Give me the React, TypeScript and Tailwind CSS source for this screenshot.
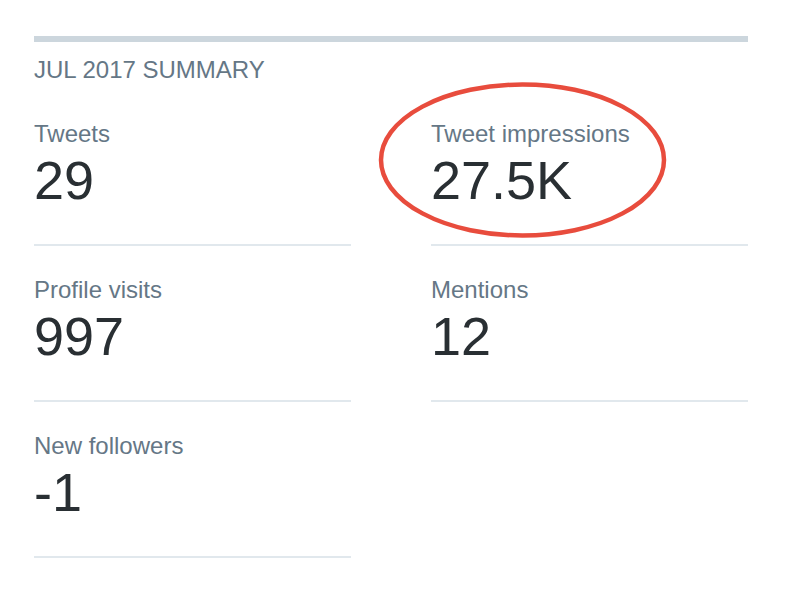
import React from "react";

type Stat = { label: string; value: string; circled?: boolean };

const stats: Stat[] = [
  { label: "Tweets", value: "29" },
  { label: "Tweet impressions", value: "27.5K", circled: true },
  { label: "Profile visits", value: "997" },
  { label: "Mentions", value: "12" },
  { label: "New followers", value: "-1" },
];

function Cell({ stat }: { stat: Stat }) {
  return (
    <div className="relative pt-[30px] pb-[34px] border-b-2 border-[#e1e8ed]">
      {stat.circled && (
        <svg
          className="absolute left-[-54px] top-[-10px] pointer-events-none"
          width="292"
          height="160"
          viewBox="0 0 292 160"
        >
          <ellipse
            cx="145.5"
            cy="80"
            rx="141.5"
            ry="75.5"
            fill="none"
            stroke="#e84c3d"
            strokeWidth="4.5"
          />
        </svg>
      )}
      <div className="relative text-[24px] leading-[28px] text-[#657786]">{stat.label}</div>
      <div className="relative mt-[2px] text-[54px] leading-[60px] text-[#292f33]">{stat.value}</div>
    </div>
  );
}

export default function App() {
  return (
    <div
      className="w-[798px] h-[608px] bg-white overflow-hidden"
      style={{ fontFamily: '"Liberation Sans", Arial, sans-serif' }}
    >
      <div className="ml-[34px] mt-[36px] w-[714px]">
        <div className="h-[6px] bg-[#ccd6dd]" />
        <div className="mt-[14px] text-[24px] leading-[28px] text-[#657786]">JUL 2017 SUMMARY</div>
        <div className="mt-[6px] grid grid-cols-2 gap-x-[80px]">
          {stats.map((s) => (
            <Cell key={s.label} stat={s} />
          ))}
        </div>
      </div>
    </div>
  );
}
